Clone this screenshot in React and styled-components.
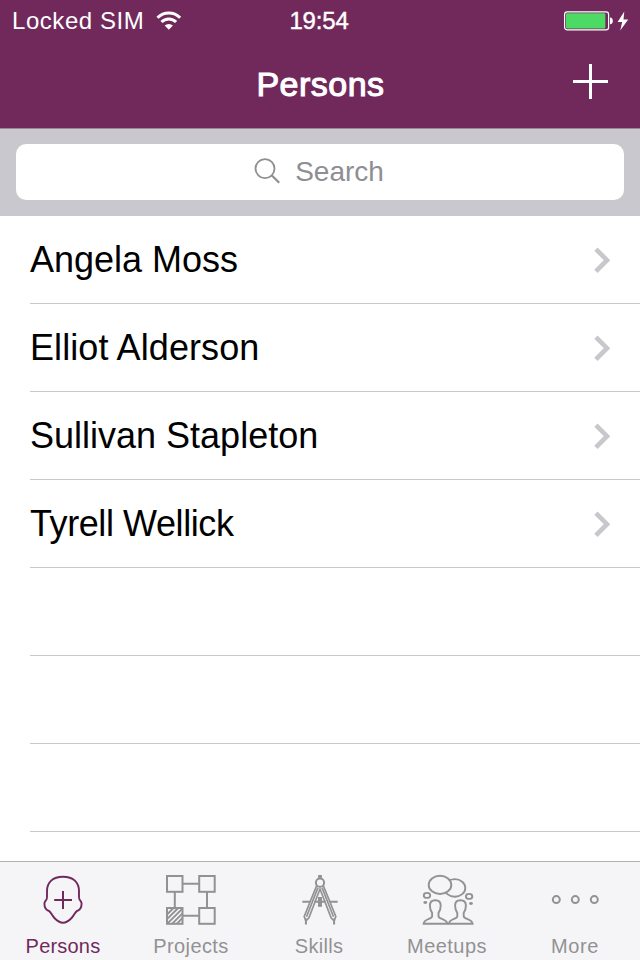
import React from 'react';
import styled, { createGlobalStyle } from 'styled-components';

const GlobalStyle = createGlobalStyle`
  * {
    box-sizing: border-box;
  }

  body {
    margin: 0;
    background: #fff;
    font-family: 'Liberation Sans', Arial, sans-serif;
  }
`;

const Screen = styled.div`
  display: flex;
  flex-direction: column;
  width: 640px;
  height: 960px;
  overflow: hidden;
  background: #fff;
`;

const Header = styled.header`
  flex: none;
  height: 128px;
  background: #71295c;
  color: #fff;
`;

const StatusBar = styled.div`
  display: grid;
  grid-template-columns: 1fr auto 1fr;
  align-items: center;
  height: 41px;
  padding: 0 11px 0 12px;
  font-size: 24px;
  line-height: 40px;
`;

const Carrier = styled.div`
  display: flex;
  align-items: center;
  gap: 12px;
  letter-spacing: 0.55px;
`;

const Clock = styled.div`
  padding-right: 3px;
  -webkit-text-stroke: 0.4px #fff;
  letter-spacing: -0.2px;
`;

const Battery = styled.div`
  display: flex;
  justify-content: flex-end;
`;

const NavBar = styled.div`
  display: grid;
  grid-template-columns: 1fr auto 1fr;
  align-items: center;
  height: 87px;
  padding: 0 31px;
`;

const Title = styled.h1`
  grid-column: 2;
  margin: 0;
  padding: 0 0 2px 1px;
  font-size: 34px;
  font-weight: 400;
  line-height: 84px;
  letter-spacing: 0.5px;
  -webkit-text-stroke: 1.1px #fff;
`;

const AddButton = styled.button`
  justify-self: end;
  display: flex;
  margin: 0 0 6px;
  padding: 0;
  border: 0;
  background: none;
`;

const SearchBar = styled.div`
  flex: none;
  height: 88px;
  padding: 15px 16px 16px;
  border-top: 1px solid #98899a;
  background: #c9c8ce;
`;

const SearchField = styled.div`
  display: flex;
  align-items: center;
  justify-content: center;
  gap: 14px;
  height: 56px;
  padding: 0 2px 1px 0;
  border-radius: 10px;
  background: #fff;
  color: #8e8e93;
  font-size: 28px;
`;

const List = styled.ul`
  flex: 1;
  min-height: 0;
  margin: 0;
  padding: 0 0 0 30px;
  overflow: hidden;
  list-style: none;
`;

const Row = styled.li`
  display: flex;
  align-items: center;
  justify-content: space-between;
  height: 88px;
  padding-right: 29px;
  border-bottom: 1px solid #c8c7cc;
  color: #000;
  font-size: 36px;
  letter-spacing: ${({ $tracking }) => $tracking || 0}px;
`;

const TabBar = styled.nav`
  flex: none;
  display: grid;
  grid-template-columns: repeat(5, 128px);
  height: 99px;
  border-top: 1px solid #b2b2b4;
  background: #f5f5f8;
`;

const Tab = styled.div`
  display: flex;
  flex-direction: column;
  align-items: center;
  padding: 12px 2px 0 0;
  color: ${({ $active }) => ($active ? '#71295c' : '#929292')};
`;

const TabLabel = styled.span`
  margin-top: 8px;
  font-size: 20px;
  line-height: 24px;
  letter-spacing: ${({ $tracking }) => $tracking}px;
`;

const TabSvg = styled.svg`
  display: block;
  flex: none;
  width: 52px;
  height: 52px;
  overflow: visible;
  fill: none;
  stroke: currentColor;
  stroke-width: 1.9;
`;

const WifiIcon = () => (
  <svg width="26" height="19" viewBox="0 0 26 19" fill="none" stroke="#fff" strokeWidth="3">
    <path d="M1.500 6.800a15.700 15.700 0 0 1 22.600 0" />
    <path d="M5.500 11a10.200 10.200 0 0 1 14.600 0" />
    <path d="M12.800 18.800l-4.100-4.200a5.900 5.900 0 0 1 8.200 0z" fill="#fff" stroke="none" />
  </svg>
);

const BatteryIcon = () => (
  <svg width="65" height="20" viewBox="0 0 65 20">
    <rect x="0.6" y="0.9" width="44" height="18" rx="2.6" fill="none" stroke="#fff" strokeWidth="1.2" />
    <rect x="2" y="2.3" width="39.3" height="15.2" rx="1" fill="#4cd964" />
    <path d="M46 6.600c2 .2 2.800 1.500 2.800 3.300s-.8 3.100-2.800 3.300z" fill="#fff" />
    <path d="M60.300 0.400L53.600 11h4.600l-2 8.600L64.200 8.400h-4.700z" fill="#fff" />
  </svg>
);

const PlusIcon = () => (
  <svg width="36" height="36" viewBox="0 0 36 36" fill="#fff">
    <path d="M16 0h3v35h-3zM0 16h35v3H0z" />
  </svg>
);

const SearchIcon = () => (
  <svg width="27" height="27" viewBox="0 0 27 27" fill="none" stroke="#8e8e93" strokeWidth="1.800">
    <circle cx="11" cy="10.600" r="9.500" />
    <path d="M17.600 17.200l7.600 7.600" strokeWidth="2.200" />
  </svg>
);

const Chevron = () => (
  <svg width="17" height="26" viewBox="0 0 17 26" fill="none" stroke="#c7c7cc" strokeWidth="4.600">
    <path d="M1.900 2.100L13 13.200L1.900 24.300" />
  </svg>
);

const PersonsIcon = () => (
  <TabSvg>
    <path d="M26 2.700C15.700 2.700 10 8.500 10 17c0 3.600.2 6.300-.3 8-.5 1.300-2.300 2.200-2.300 4.600 0 3.600 1.800 6.600 4.600 7.400 1.500.5 2.400 3.800 5.400 7 2.500 2.600 5.300 4.700 8.600 4.700s6.100-2.100 8.600-4.700c3-3.200 3.900-6.500 5.400-7 2.800-.8 4.600-3.800 4.600-7.400 0-2.400-1.800-3.300-2.300-4.600-.5-1.700-.3-4.400-.3-8 0-8.500-5.700-14.300-16-14.300z" />
    <path d="M17.200 25.900H35M26 17v18" strokeWidth="2" />
  </TabSvg>
);

const ProjectsIcon = () => (
  <TabSvg>
    <g strokeWidth="2">
      <rect x="2" y="2" width="15.500" height="15.800" />
      <rect x="34.200" y="2" width="15.500" height="15.800" />
      <rect x="2" y="34" width="15.500" height="15.800" />
      <rect x="34.200" y="34" width="15.500" height="15.800" />
      <path d="M18 9.700h16M18 41.800h16M9.800 18v16M42 18v16" />
    </g>
    <path d="M2 40.500L8.500 34M2 45.200L13.200 34M2.800 49.200L17.200 34.800M7 49.800L17.500 39.300M11.700 49.800l5.800-5.800" />
  </TabSvg>
);

const SkillsIcon = () => (
  <TabSvg>
    <rect x="25.100" y="1" width="3.800" height="4" fill="currentColor" stroke="none" />
    <circle cx="27" cy="8.700" r="4.100" strokeWidth="2" />
    <path d="M23.600 11.800L11.200 42.500l1.700 4.500 3-3.200L27 15l11.100 28.800 3 3.200 1.700-4.500L30.400 11.800M25 13.600L13.500 42.700M29 13.600l11.500 29.100" strokeWidth="1.700" />
    <path d="M12.900 44.500V50.500M41.100 44.500V50.500" strokeWidth="2" />
    <path d="M9.300 27.800h7.700M21.500 27.800h11M37 27.800h7.700" strokeWidth="2" />
    <rect x="25" y="23" width="4" height="9.800" fill="currentColor" stroke="none" />
  </TabSvg>
);

const MeetupsIcon = () => (
  <TabSvg>
    <ellipse cx="33.800" cy="13.900" rx="10.500" ry="8.800" />
    <ellipse cx="19" cy="10.900" rx="11.300" ry="9.100" fill="#f5f5f8" />
    <ellipse cx="6" cy="21.400" rx="3.200" ry="2.500" />
    <ellipse cx="48.100" cy="22.400" rx="3.200" ry="2.500" />
    <ellipse cx="4.300" cy="28.500" rx="1.900" ry="1.400" fill="currentColor" stroke="none" />
    <ellipse cx="50" cy="29.500" rx="1.900" ry="1.400" fill="currentColor" stroke="none" />
    <path id="bust" d="M14.300 26.200c-3.800 0-5.400 2-5.400 5.200 0 3.300.8 5.600 2.200 7.400v3.400c0 3.200-7.900 2-8.500 7.600h23.800c-.6-5.600-8.900-4.400-8.900-7.600v-3.400c1.400-1.800 2.200-4.100 2.200-7.400 0-3.200-1.600-5.200-5.400-5.200z" />
    <use href="#bust" x="25.200" />
  </TabSvg>
);

const MoreIcon = () => (
  <TabSvg>
    <g strokeWidth="2">
      <circle cx="7.300" cy="25.600" r="3.500" />
      <circle cx="26.300" cy="25.600" r="3.500" />
      <circle cx="45.300" cy="25.600" r="3.500" />
    </g>
  </TabSvg>
);

const persons = [
  { name: 'Angela Moss' },
  { name: 'Elliot Alderson', tracking: 0.08 },
  { name: 'Sullivan Stapleton' },
  { name: 'Tyrell Wellick', tracking: -0.42 },
];
const emptyRows = [0, 1, 2];

const tabs = [
  { label: 'Persons', Icon: PersonsIcon, tracking: 0.2 },
  { label: 'Projects', Icon: ProjectsIcon, tracking: 0.4 },
  { label: 'Skills', Icon: SkillsIcon, tracking: 0.3 },
  { label: 'Meetups', Icon: MeetupsIcon, tracking: 0.45 },
  { label: 'More', Icon: MoreIcon, tracking: 0.6 },
];

const App = () => (
  <>
    <GlobalStyle />
    <Screen>
      <Header>
        <StatusBar>
          <Carrier>
            <span>Locked SIM</span>
            <WifiIcon />
          </Carrier>
          <Clock>19:54</Clock>
          <Battery>
            <BatteryIcon />
          </Battery>
        </StatusBar>
        <NavBar>
          <Title>Persons</Title>
          <AddButton aria-label="Add">
            <PlusIcon />
          </AddButton>
        </NavBar>
      </Header>

      <SearchBar>
        <SearchField>
          <SearchIcon />
          <span>Search</span>
        </SearchField>
      </SearchBar>

      <List>
        {persons.map(({ name, tracking }) => (
          <Row key={name} $tracking={tracking}>
            <span>{name}</span>
            <Chevron />
          </Row>
        ))}
        {emptyRows.map(i => (
          <Row key={i} />
        ))}
      </List>

      <TabBar>
        {tabs.map(({ label, Icon, tracking }) => (
          <Tab key={label} $active={label === 'Persons'}>
            <Icon />
            <TabLabel $tracking={tracking}>{label}</TabLabel>
          </Tab>
        ))}
      </TabBar>
    </Screen>
  </>
);

export default App;
